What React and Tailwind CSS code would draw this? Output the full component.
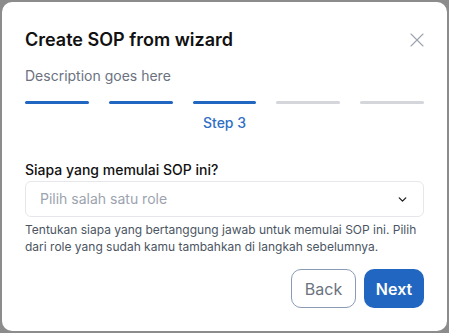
import { ChevronDown, X } from 'lucide-react'

export default function App() {
  const steps = [1, 2, 3, 4, 5]
  const current = 3

  return (
    <div className="w-[449px] h-[333px] bg-[#8c8c8c] p-[2px] font-['Inter',sans-serif]">
      <div className="h-full bg-white rounded-[10px] px-[23px] pt-[24px] flex flex-col">
        {/* Header */}
        <div className="flex items-center justify-between">
          <h2 className="text-lg leading-7 font-semibold text-[#111111]">Create SOP from wizard</h2>
          <button className="text-[#9ca3af] -mr-[5px]" aria-label="Close">
            <X size={24} strokeWidth={1.1} />
          </button>
        </div>
        <p className="mt-[12px] text-sm leading-5 text-[#6b7280]">Description goes here</p>

        {/* Progress */}
        <div className="mt-[15px] grid grid-cols-5 gap-[20px]">
          {steps.map(s => (
            <div key={s} className="flex flex-col items-center">
              <div className={`w-full h-[3px] rounded-full ${s <= current ? 'bg-[#2166c0]' : 'bg-[#d4d6dc]'}`} />
              {s === current && (
                <span className="mt-[9px] text-sm leading-5 font-medium text-[#2f6fc4]">Step {s}</span>
              )}
            </div>
          ))}
        </div>

        {/* Field */}
        <label className="mt-[27px] text-sm leading-5 font-medium text-[#111111]">Siapa yang memulai SOP ini?</label>
        <div className="mt-[1px] h-[36px] border border-[#e5e7eb] rounded-[6px] flex items-center justify-between pl-[14px] pr-[14px]">
          <span className="text-sm text-[#9ca3af]">Pilih salah satu role</span>
          <ChevronDown size={13} strokeWidth={2.5} className="text-[#222]" />
        </div>
        <p className="mt-[4px] text-xs leading-[17px] text-[#4b5563]">
          Tentukan siapa yang bertanggung jawab untuk memulai SOP ini. Pilih dari role yang sudah kamu tambahkan di langkah sebelumnya.
        </p>

        {/* Actions */}
        <div className="mt-[14px] flex justify-end gap-[8px]">
          <button className="h-[39px] w-[65px] rounded-[10px] border border-[#8a9ab4] text-base text-[#6b7280]">Back</button>
          <button className="h-[39px] w-[60px] rounded-[10px] bg-[#2166c0] text-base font-semibold text-white">Next</button>
        </div>
      </div>
    </div>
  )
}
